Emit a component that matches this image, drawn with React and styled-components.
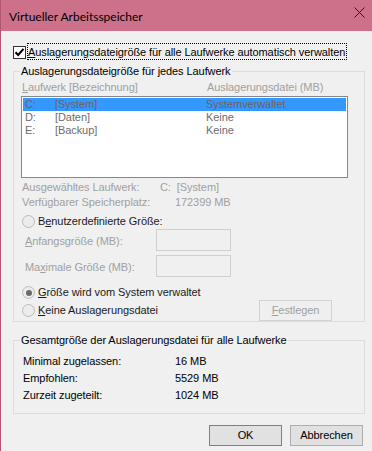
import React from 'react';
import styled, { createGlobalStyle } from 'styled-components';

const Global = createGlobalStyle`
  html, body { margin: 0; padding: 0; background: #f0f0f0; }
  body {
    font-family: "Liberation Sans", Arial, sans-serif;
    font-size: 11px;
    letter-spacing: -0.08px;
    color: #000;
  }
  * { box-sizing: border-box; }
`;

const Window = styled.div`
  width: 372px;
  height: 451px;
  border-left: 1px solid #b3566f;
  background: #f0f0f0;
  display: flex;
  flex-direction: column;
  overflow: hidden;
`;

const TitleBar = styled.div`
  height: 31px;
  flex: none;
  background: #cd7089;
  display: flex;
  align-items: center;
  justify-content: space-between;
  padding-left: 8px;
`;

const Title = styled.span`
  font-family: "Lato", "Liberation Sans", sans-serif;
  font-size: 12px;
  letter-spacing: 0;
  line-height: 15px;
  padding-top: 1px;
  color: #000;
`;

const CloseButton = styled.div`
  align-self: flex-start;
  width: 25px;
  height: 25px;
  display: flex;
  align-items: center;
  justify-content: center;
`;

const Body = styled.div`
  flex: 1;
  padding: 12px 7px 0 12px;
  display: flex;
  flex-direction: column;
`;

const CheckRow = styled.div`
  height: 17px;
  display: flex;
  align-items: flex-start;
`;

const CheckBox = styled.span`
  width: 13px;
  height: 13px;
  margin-top: 3px;
  margin-right: 1px;
  border: 1px solid #333;
  background: #fff;
  display: flex;
  align-items: center;
  justify-content: center;
  flex: none;
`;

const FocusLabel = styled.span`
  height: 17px;
  border: 1px dotted #000;
  padding: 1px 1px 0 0;
  line-height: 14px;
  white-space: nowrap;
`;

const Group = styled.fieldset`
  margin: ${p => p.$mt}px 0 0 0;
  padding: 0 7px ${p => p.$pb}px 7px;
  border: 1px solid #dcdcdc;
  min-width: 0;
  display: flex;
  flex-direction: column;
`;

const Legend = styled.legend`
  padding: 0 1px;
  margin-left: -1px;
  line-height: 14px;
  color: #000;
`;

const HeaderRow = styled.div`
  margin-top: 3px;
  height: 13px;
  line-height: 13px;
  display: grid;
  grid-template-columns: 185px 1fr;
  padding-left: 1px;
  color: #a0a0a0;
  white-space: nowrap;
`;

const ListBox = styled.div`
  margin-top: 2px;
  width: 327px;
  height: 82px;
  border: 1px solid #828790;
  background: #fff;
  padding: 1px;
  display: flex;
  flex-direction: column;
`;

const ListRow = styled.div`
  height: 13px;
  line-height: 13px;
  display: grid;
  grid-template-columns: 30px 151px 1fr;
  padding-left: 2px;
  background: ${p => (p.$selected ? '#3399ff' : 'transparent')};
  color: ${p => (p.$selected ? '#72625a' : '#6d6d6d')};
  white-space: nowrap;
`;

const InfoRow = styled.div`
  margin-top: ${p => p.$mt}px;
  height: 13px;
  line-height: 13px;
  display: flex;
  color: #a0a0a0;
  white-space: nowrap;
`;

const InfoLabel = styled.span`
  width: 139px;
  padding-left: 1px;
  flex: none;
`;

const InfoValue = styled.span`
  padding-left: ${p => p.$indent || 0}px;
`;

const RadioRow = styled.div`
  margin-top: ${p => p.$mt || 0}px;
  height: 15px;
  display: flex;
  align-items: center;
  padding-left: 1px;
  white-space: nowrap;
`;

const RadioCircle = styled.span`
  width: 13px;
  height: 13px;
  border-radius: 50%;
  border: 1px solid #bcbcbc;
  background: #ececec;
  display: flex;
  align-items: center;
  justify-content: center;
  flex: none;
  &::after {
    content: '';
    width: 6px;
    height: 6px;
    border-radius: 50%;
    background: ${p => (p.$checked ? '#6a6a6a' : 'transparent')};
  }
`;

const RadioLabel = styled.span`
  margin-left: 3px;
  line-height: 13px;
  color: #1a1a1a;
`;

const InputRow = styled.div`
  margin-top: ${p => p.$mt}px;
  height: 22px;
  display: flex;
  align-items: flex-start;
  white-space: nowrap;
`;

const InputLabel = styled.span`
  width: 135px;
  padding-left: 4px;
  margin-top: 6px;
  line-height: 13px;
  color: #a0a0a0;
  flex: none;
`;

const InputBox = styled.div`
  width: 75px;
  height: 22px;
  border: 1px solid #cfcfcf;
  background: #f0f0f0;
`;

const ActionRow = styled.div`
  height: 21px;
  display: flex;
  align-items: center;
  justify-content: space-between;
  padding-right: 25px;
`;

const Button = styled.button`
  width: 73px;
  height: 21px;
  padding: 0;
  border: 1px solid ${p => (p.$default ? '#3c8ee0' : p.disabled ? '#d2d2d2' : '#adadad')};
  background: ${p => (p.disabled ? '#efefef' : '#e1e1e1')};
  color: ${p => (p.disabled ? '#a0a0a0' : '#000')};
  font-family: "Liberation Sans", Arial, sans-serif;
  font-size: 11px;
  letter-spacing: -0.08px;
  line-height: 13px;
`;

const TotalRow = styled.div`
  margin-top: ${p => p.$mt}px;
  height: 13px;
  line-height: 13px;
  display: flex;
  white-space: nowrap;
`;

const TotalLabel = styled.span`
  width: 154px;
  padding-left: 2px;
  flex: none;
`;

const ButtonRow = styled.div`
  margin-top: 11px;
  display: flex;
  justify-content: flex-end;
  gap: 8px;
  padding-right: 2px;
`;

const Key = styled.u`
  text-decoration: underline;
  text-underline-offset: 1px;
`;

const drives = [
  { d: 'C:', n: '[System]', v: 'Systemverwaltet', sel: true },
  { d: 'D:', n: '[Daten]', v: 'Keine' },
  { d: 'E:', n: '[Backup]', v: 'Keine' },
];

export default function App() {
  return (
    <>
      <Global />
      <Window>
        <TitleBar>
          <Title>Virtueller Arbeitsspeicher</Title>
          <CloseButton>
            <svg width="11" height="11" viewBox="0 0 11 11">
              <path d="M0.5 0.5 L10.5 10.5 M10.5 0.5 L0.5 10.5" stroke="#1e1e1e" strokeWidth="1" fill="none" />
            </svg>
          </CloseButton>
        </TitleBar>
        <Body>
          <CheckRow>
            <CheckBox>
              <svg width="11" height="11" viewBox="0 0 11 11">
                <path d="M1.5 5.2 L4.2 8 L9.5 1.8" stroke="#000" strokeWidth="2" fill="none" />
              </svg>
            </CheckBox>
            <FocusLabel>
              <Key>A</Key>uslagerungsdateigröße für alle Laufwerke automatisch verwalten
            </FocusLabel>
          </CheckRow>

          <Group $mt={4} $pb={0}>
            <Legend>Auslagerungsdateigröße für jedes Laufwerk</Legend>
            <HeaderRow>
              <span><Key>L</Key>aufwerk [Bezeichnung]</span>
              <span>Auslagerungsdatei (MB)</span>
            </HeaderRow>
            <ListBox>
              {drives.map(r => (
                <ListRow key={r.d} $selected={r.sel}>
                  <span>{r.d}</span>
                  <span>{r.n}</span>
                  <span>{r.v}</span>
                </ListRow>
              ))}
            </ListBox>
            <InfoRow $mt={3}>
              <InfoLabel>Ausgewähltes Laufwerk:</InfoLabel>
              <InfoValue>C:&nbsp; [System]</InfoValue>
            </InfoRow>
            <InfoRow $mt={2}>
              <InfoLabel>Verfügbarer Speicherplatz:</InfoLabel>
              <InfoValue $indent={15}>172399 MB</InfoValue>
            </InfoRow>
            <RadioRow $mt={5}>
              <RadioCircle />
              <RadioLabel>B<Key>e</Key>nutzerdefinierte Größe:</RadioLabel>
            </RadioRow>
            <InputRow $mt={0}>
              <InputLabel><Key>A</Key>nfangsgröße (MB):</InputLabel>
              <InputBox />
            </InputRow>
            <InputRow $mt={4}>
              <InputLabel>Ma<Key>x</Key>imale Größe (MB):</InputLabel>
              <InputBox />
            </InputRow>
            <RadioRow $mt={8}>
              <RadioCircle $checked />
              <RadioLabel><Key>G</Key>röße wird vom System verwaltet</RadioLabel>
            </RadioRow>
            <ActionRow>
              <RadioRow>
                <RadioCircle />
                <RadioLabel><Key>K</Key>eine Auslagerungsdatei</RadioLabel>
              </RadioRow>
              <Button disabled><Key>F</Key>estlegen</Button>
            </ActionRow>
          </Group>

          <Group $mt={11} $pb={11}>
            <Legend>Gesamtgröße der Auslagerungsdatei für alle Laufwerke</Legend>
            <TotalRow $mt={8}>
              <TotalLabel>Minimal zugelassen:</TotalLabel>
              <span>16 MB</span>
            </TotalRow>
            <TotalRow $mt={4}>
              <TotalLabel>Empfohlen:</TotalLabel>
              <span>5529 MB</span>
            </TotalRow>
            <TotalRow $mt={4}>
              <TotalLabel>Zurzeit zugeteilt:</TotalLabel>
              <span>1024 MB</span>
            </TotalRow>
          </Group>

          <ButtonRow>
            <Button $default>OK</Button>
            <Button>Abbrechen</Button>
          </ButtonRow>
        </Body>
      </Window>
    </>
  );
}
